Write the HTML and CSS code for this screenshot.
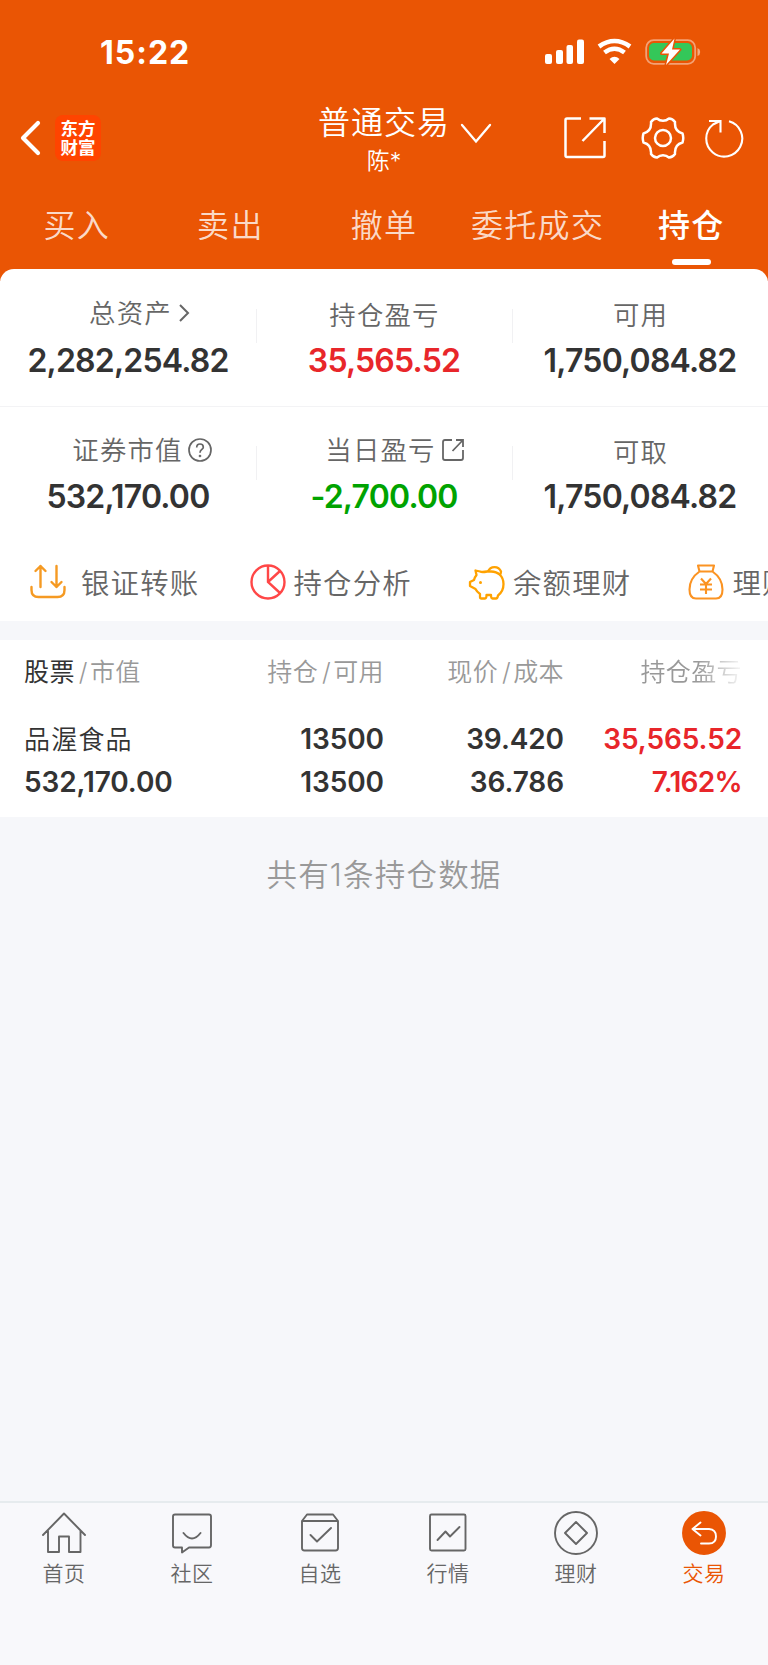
FILE: index.html
```html
<!DOCTYPE html>
<html lang="zh-CN">
<head>
  <meta charset="UTF-8" />
  <meta name="viewport" content="width=device-width, initial-scale=1.0" />
  <title>持仓</title>
  <link rel="stylesheet" href="styles.css">
</head>
<body>
  <header class="header">
    <div class="status-bar">
      <span class="time">15:22</span>
      <svg class="status-icons" width="158" height="28" viewBox="0 0 158 28">
        <g fill="#fff">
          <rect x="1" y="16" width="7" height="10" rx="2"/>
          <rect x="12" y="12" width="7" height="14" rx="2"/>
          <rect x="22.5" y="7" width="6.5" height="19" rx="2"/>
          <rect x="33" y="1.5" width="7" height="24.5" rx="2"/>
          <path d="M70.500 26L65.500 21Q70.500 16.500 75.500 21Z"/>
        </g>
        <g fill="none" stroke="#fff" stroke-width="4.600">
          <path d="M55 8.500Q70.500-2.500 86 8.500"/>
          <path d="M60.500 14.500Q70.500 7 80.500 14.500"/>
        </g>
        <rect x="102.200" y="2.200" width="49" height="23.600" rx="7.500" fill="none" stroke="#fff" stroke-opacity=".45" stroke-width="1.800"/>
        <path d="M153.500 10v8q2.700-1 2.700-4t-2.700-4z" fill="#fff" fill-opacity=".5"/>
        <rect x="105" y="5" width="43" height="17.500" rx="5" fill="#34c759"/>
        <path d="M130.500 .5L117.500 15.500H125L122 27L136 11.500H128Z" fill="#fff" stroke="#ea5504" stroke-width="3" paint-order="stroke" stroke-linejoin="round"/>
      </svg>
    </div>

    <div class="nav">
      <div class="nav-left">
        <svg width="22" height="36" viewBox="0 0 22 36"><path d="M19 3L4 18L19 33" fill="none" stroke="#fff" stroke-width="4.200" stroke-linecap="round" stroke-linejoin="round"/></svg>
        <div class="logo">东方<br>财富</div>
      </div>
      <div class="account">
        <div class="account-type">普通交易</div>
        <div class="account-name">陈*</div>
      </div>
      <div class="nav-right">
        <svg class="arrow-down" width="32" height="22" viewBox="0 0 32 22"><path d="M2 2L16 18.500L30 2" fill="none" stroke="#fff" stroke-width="2.300" stroke-linecap="round"/></svg>
        <svg class="icon-share" width="44" height="44" viewBox="0 0 44 44" fill="none" stroke="#fff" stroke-width="2.500" stroke-linejoin="round"><path d="M18 2.500H4Q2.500 2.500 2.500 4V39.500Q2.500 41 4 41H40Q41.500 41 41.500 39.500V25M26.500 2.500H41.500V17M41 3L19.500 25"/></svg>
        <svg class="icon-gear" width="44" height="44" viewBox="0 0 44 44" fill="none" stroke="#fff" stroke-width="2.500" stroke-linejoin="round"><path d="M16 2.500C19.500 5.500 24.500 5.500 28 2.500Q31.500 2.500 34 6C33.500 12 36 16 41.500 17.500Q43 22 41.500 26.500C36 28 33.500 32 34 38Q31.500 41.500 28 41.500C24.500 38.500 19.500 38.500 16 41.500Q12.500 41.500 10 38C10.500 32 8 28 2.500 26.500Q1 22 2.500 17.500C8 16 10.500 12 10 6Q12.500 2.500 16 2.500Z"/><circle cx="22" cy="22" r="8"/></svg>
        <svg class="icon-refresh" width="42" height="42" viewBox="0 0 42 42" fill="none" stroke="#fff" stroke-width="2.100"><path d="M25 4.200A18 18 0 1 1 9 7.500L16 4M5 4H16.500V15.500"/></svg>
      </div>
    </div>

    <nav class="tabs">
      <a>买入</a>
      <a>卖出</a>
      <a>撤单</a>
      <a>委托成交</a>
      <a class="active">持仓</a>
    </nav>
  </header>

  <section class="assets">
    <div class="asset-row">
      <div class="asset">
        <div class="label up with-arrow">总资产<svg class="icon-more" width="14" height="20" viewBox="0 0 14 20"><path d="M3 2L11 10L3 18" fill="none" stroke="#666" stroke-width="2"/></svg></div>
        <div class="value">2,282,254.82</div>
      </div>
      <div class="asset">
        <div class="label">持仓盈亏</div>
        <div class="value red">35,565.52</div>
      </div>
      <div class="asset">
        <div class="label">可用</div>
        <div class="value">1,750,084.82</div>
      </div>
    </div>
    <div class="asset-row second">
      <div class="asset">
        <div class="label up with-icon">证券市值<svg class="icon-help" width="24" height="24" viewBox="0 0 24 24" fill="none" stroke="#666" stroke-width="1.700"><circle cx="12" cy="12" r="11"/><path d="M8.700 9.500Q8.700 6 12 6T15.300 9.200C15.300 11.500 12 11.500 12 14.700"/><circle cx="12" cy="18" r=".5"/></svg></div>
        <div class="value">532,170.00</div>
      </div>
      <div class="asset">
        <div class="label up with-link">当日盈亏<svg class="icon-link" width="24" height="24" viewBox="0 0 24 24" fill="none" stroke="#666" stroke-width="1.800"><path d="M11 2H4Q2 2 2 4V20Q2 22 4 22H20Q22 22 22 20V12M15 2H22V9M22 2L11.500 13"/></svg></div>
        <div class="value green">-2,700.00</div>
      </div>
      <div class="asset">
        <div class="label">可取</div>
        <div class="value">1,750,084.82</div>
      </div>
    </div>

    <div class="shortcuts">
      <div class="shortcut first">
        <svg width="38" height="38" viewBox="0 0 38 38" fill="none" stroke="#f59a23" stroke-width="2.400" stroke-linecap="round" stroke-linejoin="round"><path d="M2.500 24V27Q2.500 34 9.500 34H28.500Q35.500 34 35.500 27V24M11.500 24V3M6.500 8L11.500 3L16.500 8M27.500 3V24M22.500 19L27.500 24L32.500 19"/></svg>
        <span>银证转账</span>
      </div>
      <div class="shortcut">
        <svg width="38" height="38" viewBox="0 0 38 38" fill="none" stroke="#ff4747" stroke-width="2.400"><circle cx="19" cy="19" r="16.500"/><path d="M19 2.500V19L31 30M19 19L31 8"/></svg>
        <span>持仓分析</span>
      </div>
      <div class="shortcut">
        <svg width="38" height="38" viewBox="0 0 38 38" fill="none" stroke="#ffa200" stroke-width="2.300" stroke-linejoin="round"><path d="M19 8.500Q14 9.500 12 8.500L7.500 7.500L8.500 12Q6.500 14.500 6 17L2 19V23L7.500 26Q9 29 12 31V34Q12 35.500 13.500 35.500H17Q18.500 35.500 18.500 32H23Q23 35.500 24.500 35.500H28Q29.500 35.500 30 32.500C34 29.500 35.500 26 35.500 21C35.500 13 30 8.500 23 8.500Z"/><path d="M20 8.500A7 7 0 0 1 33 8.500Q33 11 31.500 12.500"/><circle cx="12.500" cy="19.500" r="1.500" fill="#ffa200" stroke="none"/></svg>
        <span>余额理财</span>
      </div>
      <div class="shortcut">
        <svg width="38" height="38" viewBox="0 0 38 38" fill="none" stroke="#fb9322" stroke-width="2.100" stroke-linejoin="round"><path d="M11.500 8.500L10 2.500H26L24.500 8.500ZM11.500 8.500C5 13 1.500 19 1.500 26.500C1.500 32 3.500 35.500 8 35.500H28C32.500 35.500 34.500 32 34.500 26.500C34.500 19 31 13 24.500 8.500M13 15.500L18 21L23 15.500M12 21.500H24M12 26.500H24M18 21V31"/></svg>
        <span>理财</span>
      </div>
    </div>
  </section>

  <section class="positions">
    <div class="grid-row head">
      <div><b>股票</b><i>/</i>市值</div>
      <div>持仓<i>/</i>可用</div>
      <div>现价<i>/</i>成本</div>
      <div class="faded">持仓盈亏</div>
    </div>
    <div class="grid-row item">
      <div class="stock">品渥食品</div>
      <div>13500</div>
      <div>39.420</div>
      <div class="red">35,565.52</div>
      <div>532,170.00</div>
      <div>13500</div>
      <div>36.786</div>
      <div class="red percent">7.162%</div>
    </div>
  </section>

  <p class="total">共有1条持仓数据</p>

  <footer class="bottom-bar">
    <div class="bar-item">
      <svg width="46" height="46" viewBox="0 0 46 46"><path d="M2 25L23 3.500L44 25M7 21V42H18V26.500H28V42H39.500V21"/></svg>
      <span>首页</span>
    </div>
    <div class="bar-item">
      <svg width="46" height="46" viewBox="0 0 46 46"><path d="M6 4.500H40Q42 4.500 42 6.500V35Q42 37.500 40 37.500H20L13 42.500V37.500H6Q4 37.500 4 35.500V6.500Q4 4.500 6 4.500ZM14.500 23Q23 34 31.500 23"/></svg>
      <span>社区</span>
    </div>
    <div class="bar-item">
      <svg width="46" height="46" viewBox="0 0 46 46"><path d="M5 11L10 4.500H36L41 11V38Q41 40.500 38.500 40.500H7.500Q5 40.500 5 38ZM5 11H41M13.500 25L20 31.500L34 18"/></svg>
      <span>自选</span>
    </div>
    <div class="bar-item">
      <svg width="46" height="46" viewBox="0 0 46 46"><rect x="5" y="4.500" width="35.500" height="36" rx="1.500"/><path d="M12.500 30L20.500 21.500L25 26.500L34.500 17"/></svg>
      <span>行情</span>
    </div>
    <div class="bar-item">
      <svg width="46" height="46" viewBox="0 0 46 46"><circle cx="23" cy="23" r="21"/><path d="M23 12L34 23L23 34L12 23Z"/></svg>
      <span>理财</span>
    </div>
    <div class="bar-item current">
      <svg width="46" height="46" viewBox="0 0 46 46"><circle cx="23" cy="23" r="21"/><path d="M19.500 12.500L11.500 19L19.500 25.500M11.500 19H28Q35 19.500 35 26.500T28 33.500H20"/></svg>
      <span>交易</span>
    </div>
  </footer>
</body>
</html>
```

FILE: styles.css
```css
* {
  box-sizing: border-box;
}

body {
  margin: 0;
  min-height: 1665px;
  display: flex;
  flex-direction: column;
  font-family: Inter, "Noto Sans CJK SC", sans-serif;
  font-weight: 350;
  color: #333;
  background: #f6f7fa;
  overflow-x: hidden;
}

svg {
  display: block;
  flex: none;
}

.header {
  height: 281px;
  background: #ea5504;
  color: #fff;
}

.status-bar {
  height: 104px;
  display: flex;
  align-items: center;
  justify-content: space-between;
  padding: 0 66px 0 100px;
}

.time {
  font-size: 32px;
  font-weight: 700;
  letter-spacing: 1px;
}

.nav {
  height: 68px;
  display: grid;
  grid-template-columns: 300px 168px 300px;
  grid-template-rows: 68px;
}

.nav-left {
  display: flex;
  align-items: center;
  gap: 14px;
  padding-left: 19px;
}

.logo {
  width: 46px;
  height: 46px;
  padding-top: 4px;
  border-radius: 8px;
  background: #ff4400;
  text-align: center;
  font-size: 17.5px;
  line-height: 19px;
  font-weight: 700;
}

.account {
  text-align: center;
}

.account-type {
  padding-top: 1px;
  font-size: 32px;
  line-height: 36px;
  letter-spacing: 1px;
}

.account-name {
  font-size: 23px;
  line-height: 40px;
}

.nav-right {
  display: flex;
  align-items: center;
  padding-right: 22px;
}

.arrow-down {
  margin: -8px 0 0 -8px;
}

.icon-share {
  margin-left: 71px;
}

.icon-gear {
  margin-left: 34px;
}

.icon-refresh {
  margin-left: 19px;
}

.tabs {
  height: 97px;
  display: grid;
  grid-template-columns: repeat(5, 1fr);
}

.tabs a {
  display: flex;
  flex-direction: column;
  align-items: center;
  padding-top: 30px;
  font-size: 32px;
  line-height: 48px;
  letter-spacing: 1.3px;
  color: rgba(255, 255, 255, 0.8);
}

.tabs .active {
  color: #fff;
  font-weight: 500;
}

.tabs .active::after {
  content: "";
  width: 39px;
  height: 6px;
  margin-top: 9px;
  border-radius: 3px;
  background: #fff;
}

.assets {
  height: 352px;
  margin-top: -12px;
  border-radius: 14px 14px 0 0;
  background: #fff;
  overflow: hidden;
}

.asset-row {
  height: 138px;
  padding-top: 26px;
  display: grid;
  grid-template-columns: repeat(3, 1fr);
  border-bottom: 1px solid #f3f3f5;
}

.asset-row.second {
  height: 130px;
  padding-top: 25px;
  border-bottom: none;
}

.asset {
  height: 80px;
  text-align: center;
}

.asset + .asset {
  background: linear-gradient(#f1f1f3, #f1f1f3) 0 14px / 1px 34px no-repeat;
}

.label {
  display: flex;
  justify-content: center;
  align-items: center;
  height: 40px;
  padding: 0 0 4px 1px;
  font-size: 26.4px;
  letter-spacing: 1.2px;
  color: #666;
}

.label.up {
  height: 36px;
  margin-bottom: 4px;
}

.label svg {
  margin: 4px 0 0 5px;
}

.label.with-icon {
  padding-left: 28px;
}

.label.with-link {
  padding-left: 22px;
}

.label.with-arrow {
  padding-left: 24px;
}

.value {
  font-size: 32px;
  line-height: 52px;
  font-weight: 600;
  letter-spacing: -0.8px;
}

.second .value {
  line-height: 50px;
}

.red {
  color: #e8262a;
}

.green {
  color: #00a300;
}

.shortcuts {
  height: 84px;
  display: flex;
  padding: 0 0 0 29px;
}

.shortcut {
  flex: none;
  width: 219.5px;
  height: 90px;
  display: flex;
  align-items: center;
  gap: 7px;
  font-size: 28.4px;
  letter-spacing: 1.2px;
  color: #666;
  white-space: nowrap;
}

.shortcut span {
  padding-bottom: 2px;
}

.shortcut.first {
  gap: 14px;
}

.positions {
  height: 177px;
  margin-top: 19px;
  background: #fff;
}

.grid-row {
  display: grid;
  grid-template-columns: 200px 160px 180px 178px;
  padding-left: 24px;
  text-align: right;
}

.grid-row > div:nth-child(4n + 1) {
  text-align: left;
}

.head {
  height: 64px;
  line-height: 64px;
  font-size: 25px;
  letter-spacing: 0.4px;
  color: #999;
}

.head b {
  font-weight: 400;
  color: #333;
}

.head i {
  margin: 0 2px 0 4px;
  font-style: normal;
}

.faded {
  -webkit-mask-image: linear-gradient(90deg, #000 75%, transparent 102%);
  mask-image: linear-gradient(90deg, #000 75%, transparent 102%);
}

.item {
  padding-top: 14px;
  grid-auto-rows: 43px;
  line-height: 43px;
  font-size: 28px;
  font-weight: 600;
  letter-spacing: -0.1px;
}

.item .percent {
  letter-spacing: -0.7px;
}

.item .stock {
  font-size: 26px;
  font-weight: 350;
  letter-spacing: 1.2px;
}

.total {
  margin: 0;
  padding-top: 33px;
  text-align: center;
  font-size: 30.5px;
  line-height: 50px;
  letter-spacing: 1.2px;
  color: #999;
}

.bottom-bar {
  height: 164px;
  margin-top: auto;
  padding-top: 7px;
  display: grid;
  grid-template-columns: repeat(6, 1fr);
  border-top: 2px solid #e6ebee;
  background: #f8f8fb;
}

.bar-item {
  display: flex;
  flex-direction: column;
  align-items: center;
  font-size: 21px;
  line-height: 36px;
  letter-spacing: 0.6px;
  color: #666;
}

.bar-item svg {
  fill: none;
  stroke: #666;
  stroke-width: 1.9;
  stroke-linejoin: round;
  stroke-linecap: round;
}

.current {
  color: #ea5504;
}

.current svg {
  stroke: #fff;
}

.current circle {
  fill: #ea5504;
  stroke: #ea5504;
}
```
